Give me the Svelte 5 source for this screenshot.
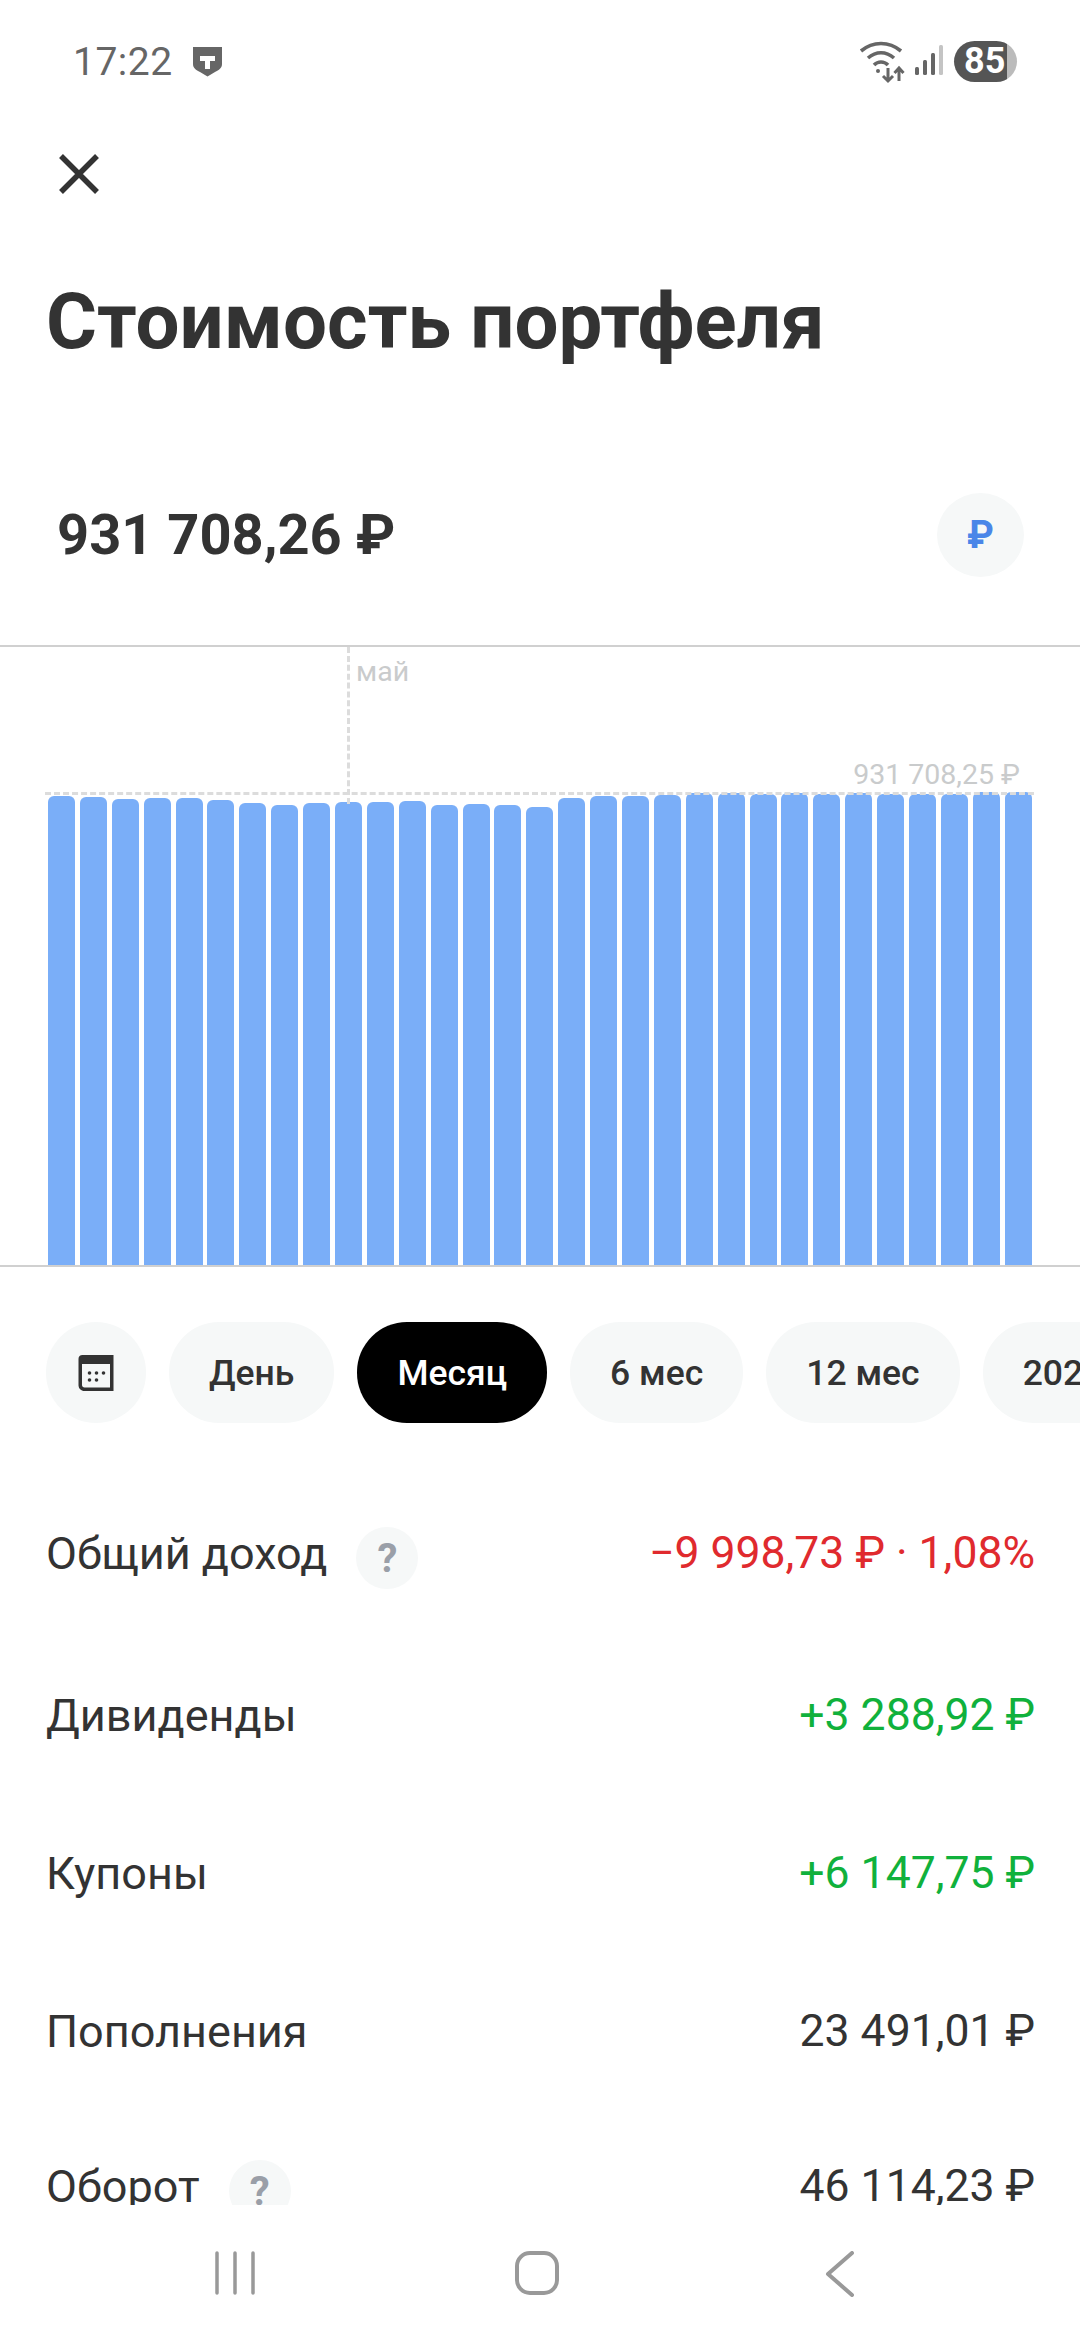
<script>
	const barTops = [796, 797, 799, 798, 798, 800, 803, 805, 803, 802, 802, 801, 805, 804, 805, 807, 798, 796, 796, 795, 793, 793, 794, 793, 794, 793, 794, 794, 794, 792, 792];
	const chartBottom = 1265;

	const periods = [
		{ label: 'День' },
		{ label: 'Месяц', active: true },
		{ label: '6 мес' },
		{ label: '12 мес' },
		{ label: '2024' }
	];

	const rows = [
		{ label: 'Общий доход', value: '−9 998,73 ₽ · 1,08%', tone: 'neg', help: true },
		{ label: 'Дивиденды', value: '+3 288,92 ₽', tone: 'pos' },
		{ label: 'Купоны', value: '+6 147,75 ₽', tone: 'pos' },
		{ label: 'Пополнения', value: '23 491,01 ₽' },
		{ label: 'Оборот', value: '46 114,23 ₽', help: true }
	];
</script>

<div class="screen">
	<div class="status">
		<div class="status-left">
			<span class="time">17:22</span>
			<svg class="shield" width="29" height="30" viewBox="0 0 29 30">
				<path d="M0 0H29V17C29 21 26 23 22 25L14.5 29.500L7 25C3 23 0 21 0 17Z" fill="#666" />
				<path d="M7 9H22V14H17V22H12V14H7Z" fill="#fff" />
			</svg>
		</div>
		<div class="status-right">
			<svg width="46" height="44" viewBox="0 0 46 44" fill="none" stroke="#666" stroke-width="3.600">
				<path d="M2 11C14 1 30 1 42 11" />
				<path d="M9 18C17 11 27 11 35 18" />
				<path d="M15 25C19 21 25 21 29 25" />
				<circle cx="19" cy="31" r="2" fill="#666" stroke="none" />
				<path d="M29 28V41M24 36L29 41L34 36" stroke-width="3" />
				<path d="M40 41V28M35.500 33L40 28L44.500 33" stroke-width="3" />
			</svg>
			<svg class="signal" width="28" height="30" viewBox="0 0 28 30">
				<rect x="0" y="22" width="4" height="8" rx="1.500" fill="#666" />
				<rect x="8" y="15" width="4" height="15" rx="1.500" fill="#666" />
				<rect x="16" y="8" width="4" height="22" rx="1.500" fill="#666" />
				<rect x="24" y="0" width="4" height="30" rx="1.500" fill="#c4c4c4" />
			</svg>
			<div class="battery"><span>85</span></div>
		</div>
	</div>

	<div class="main">
		<div class="close-row">
			<svg width="40" height="40" viewBox="0 0 40 40" stroke="#333" stroke-width="5.500">
				<path d="M2 2L38 38M38 2L2 38" />
			</svg>
		</div>

		<h1>Стоимость портфеля</h1>

		<div class="total">
			<span>931 708,26 ₽</span>
			<button class="currency">₽</button>
		</div>

		<div class="chart">
			<div class="bars">
				{#each barTops as top}
					<div class="bar" style:height="{chartBottom - top}px"></div>
				{/each}
			</div>
			<div class="line-v"></div>
			<div class="line-h"></div>
			<span class="month">май</span>
			<span class="max">931 708,25 ₽</span>
		</div>

		<div class="periods">
			<div class="pill calendar">
				<svg width="36" height="36" viewBox="0 0 35 36">
					<path d="M4 0H35V36H6C2.500 36 0 33.500 0 30V4C0 1.500 1.500 0 4 0Z" fill="#333" />
					<path d="M3.500 9H31.500V32.500H6C4.500 32.500 3.500 31.500 3.500 30Z" fill="#f6f8f8" />
					<circle cx="11" cy="18" r="1.800" fill="#333" />
					<circle cx="18" cy="18" r="1.800" fill="#333" />
					<circle cx="25" cy="18" r="1.800" fill="#333" />
					<circle cx="11" cy="25" r="1.800" fill="#333" />
					<circle cx="18" cy="25" r="1.800" fill="#333" />
				</svg>
			</div>
			{#each periods as p}
				<div class="pill" class:active={p.active}>{p.label}</div>
			{/each}
		</div>

		<div class="rows">
			{#each rows as row}
				<div class="row">
					<div class="label">
						{row.label}
						{#if row.help}
							<span class="help">?</span>
						{/if}
					</div>
					<div class="value {row.tone || ''}">{row.value}</div>
				</div>
			{/each}
		</div>
	</div>

	<div class="nav">
		<svg class="nav-recent" width="40" height="44" viewBox="0 0 40 44" stroke="#999" stroke-width="3.500" stroke-linecap="round">
			<path d="M2 2V42M20 2V42M38 2V42" />
		</svg>
		<svg class="nav-home" width="44" height="44" viewBox="0 0 44 44" fill="none" stroke="#999" stroke-width="4">
			<rect x="2" y="2" width="40" height="40" rx="13" />
		</svg>
		<svg width="30" height="46" viewBox="0 0 30 46" fill="none" stroke="#999" stroke-width="4" stroke-linecap="round" stroke-linejoin="round">
			<path d="M27 2L3 23L27 44" />
		</svg>
	</div>
</div>

<style>
	:global(body) {
		background: #fff;
	}

	.screen {
		width: 1080px;
		height: 2340px;
		display: flex;
		flex-direction: column;
		overflow: hidden;
		font-family: Roboto, 'Liberation Sans', sans-serif;
		color: #333;
		background: #fff;
	}

	.status {
		height: 124px;
		flex: none;
		display: flex;
		align-items: center;
		justify-content: space-between;
		padding: 0 63px 0 73px;
	}

	.status-left,
	.status-right {
		display: flex;
		align-items: center;
	}

	.time {
		font-size: 39px;
		color: #666;
		letter-spacing: 0.5px;
	}

	.shield {
		margin-left: 20px;
	}

	.signal {
		margin-left: 10px;
		margin-top: -4px;
	}

	.battery {
		width: 63px;
		height: 41px;
		margin-left: 11px;
		margin-top: -2px;
		border-radius: 21px;
		background: linear-gradient(90deg, #555 0 53px, #bbb 53px);
		color: #fff;
		font-size: 36px;
		font-weight: 700;
		line-height: 41px;
		padding-left: 10px;
		box-sizing: border-box;
	}

	.main {
		flex: 1;
		min-height: 0;
		overflow: hidden;
	}

	.close-row {
		height: 100px;
		display: flex;
		align-items: center;
		padding-left: 59px;
	}

	h1 {
		margin: 53px 0 0 46px;
		font-size: 78px;
		line-height: 90px;
		font-weight: 700;
	}

	.total {
		height: 84px;
		margin-top: 126px;
		padding: 0 56px 0 57px;
		display: flex;
		align-items: center;
		justify-content: space-between;
		font-size: 56px;
		font-weight: 700;
	}

	.currency {
		width: 87px;
		height: 84px;
		border: 0;
		border-radius: 50%;
		background: #f6f8f8;
		color: #4a86e8;
		font: 700 38px Roboto, sans-serif;
		padding: 0;
	}

	.chart {
		position: relative;
		height: 618px;
		margin-top: 68px;
		border-top: 2px solid #d0d0d0;
		border-bottom: 2px solid #d0d0d0;
		padding-left: 48px;
		display: flex;
		align-items: flex-end;
	}

	.bars {
		width: 984px;
		display: flex;
		align-items: flex-end;
		justify-content: space-between;
	}

	.bar {
		width: 27px;
		background: #7aaef8;
		border-radius: 6px 6px 0 0;
	}

	.line-v {
		position: absolute;
		left: 347px;
		top: 0;
		height: 157px;
		border-left: 3px dashed #dcdcdc;
	}

	.line-h {
		position: absolute;
		left: 45px;
		right: 46px;
		top: 145px;
		border-top: 3px dashed #dcdcdc;
	}

	.month,
	.max {
		position: absolute;
		font-size: 28.5px;
		line-height: 32px;
		color: #c9cbcc;
	}

	.month {
		left: 356px;
		top: 9px;
	}

	.max {
		right: 60px;
		top: 112px;
	}

	.periods {
		display: flex;
		gap: 23px;
		margin-top: 55px;
		padding-left: 46px;
		white-space: nowrap;
	}

	.pill {
		flex: none;
		height: 101px;
		padding: 0 40px;
		display: flex;
		align-items: center;
		justify-content: center;
		border-radius: 50px;
		background: #f6f8f8;
		font-size: 35.5px;
		font-weight: 500;
	}

	.pill.calendar {
		width: 100px;
		padding: 0;
	}

	.pill.active {
		background: #000;
		color: #fff;
	}

	.rows {
		margin-top: 77px;
	}

	.row {
		height: 106px;
		margin-bottom: 52px;
		display: flex;
		align-items: center;
		justify-content: space-between;
		padding: 0 46px;
		font-size: 45px;
	}

	.row:first-child {
		margin-bottom: 56px;
	}

	.row:nth-child(4) {
		margin-bottom: 49px;
	}

	.label {
		display: flex;
		align-items: center;
	}

	.value {
		font-size: 44.5px;
		margin-right: -1px;
	}

	.help {
		width: 62px;
		height: 62px;
		margin: 10px 0 0 29px;
		border-radius: 50%;
		background: #f6f8f8;
		color: #9a9fa8;
		font-size: 40px;
		font-weight: 700;
		display: flex;
		align-items: center;
		justify-content: center;
	}

	.neg {
		color: #e02a2e;
	}

	.pos {
		color: #10b13c;
	}

	.nav {
		flex: none;
		height: 135px;
		background: #fff;
		display: flex;
		align-items: flex-start;
		padding: 46px 0 0 215px;
		box-sizing: border-box;
	}

	.nav-recent {
		margin-right: 260px;
	}

	.nav-home {
		margin-right: 266px;
	}
</style>
